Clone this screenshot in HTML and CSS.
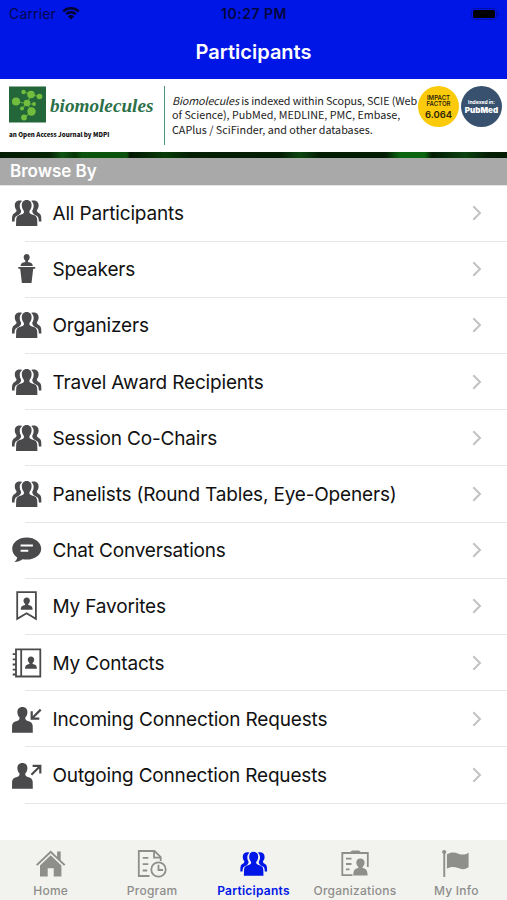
FILE: index.html
```
<!DOCTYPE html>
<html lang="en">
<head>
    <meta charset="UTF-8">
    <meta name="viewport" content="width=device-width, initial-scale=1.0">
    <title>Participants</title>
    <link rel="stylesheet" href="styles.css">
</head>
<body>
    <!-- shared icons -->
    <svg class="sprite">
        <symbol id="people" viewBox="0 0 30 30">
            <path d="M10.200 3C6.200 1.700 2.700 3.500 2.800 7.500c0 2 .7 3.400 1.700 4.600.2 1.500-.5 2.300-2.200 3.200C.4 16.400 0 18 0 23.500h2.600c0-3.600.5-4.800 2.500-5.800 2.700-1.300 4.300-2.600 4-5.200-1.100-1.600-1.500-3.200-1.300-5.400.2-1.700 1.100-3.200 2.400-4.100zM19.200 3c4-1.300 7.500.5 7.400 4.500 0 2-.7 3.400-1.700 4.600-.2 1.500.5 2.300 2.200 3.200 1.900 1.100 2.300 2.700 2.300 8.200h-2.600c0-3.600-.5-4.800-2.500-5.800-2.700-1.300-4.300-2.600-4-5.200 1.100-1.600 1.500-3.200 1.300-5.400-.2-1.700-1.100-3.200-2.400-4.100z"/>
            <path d="M14.700 2c-3.200 0-5.100 2.300-4.900 5.600.1 2.200.9 4 2.100 5.300.3 1.700-.2 2.700-2 3.300-3.700 1.200-5.500 1.900-5.700 5.500l-.2 6.300h21.400l-.2-6.300c-.2-3.600-2-4.300-5.700-5.500-1.800-.6-2.300-1.600-2-3.300 1.200-1.300 2-3.100 2.100-5.300.2-3.300-1.700-5.600-4.900-5.600z"/>
        </symbol>
        <symbol id="speaker" viewBox="0 0 30 30">
            <path d="M14.700 0c-1.900 0-3 1.400-3 3.200 0 1.500.7 2.800 1.700 3.500v1.200c-3.300.7-4.800 1.400-4.800 4h12.200c0-2.600-1.500-3.300-4.800-4V6.700c1-.7 1.700-2 1.700-3.500C17.700 1.400 16.600 0 14.700 0zM6.300 12.900h16.900v1.900H6.300zM8.200 14.700h13L19.500 29H9.900z"/>
        </symbol>
        <symbol id="chat" viewBox="0 0 30 30">
            <path fill-rule="evenodd" d="M14.700 2.500C6.500 2.500.2 7.400.2 13.700c0 3.600 1.900 6.700 5 8.700-.3 1.700-1.200 3.200-2.900 4.600 3.400-.2 6.200-1.100 8.400-2.700 10.100 1.600 18.500-3.400 18.500-10.600 0-6.300-6.300-11.200-14.500-11.200zM8.600 9.500h12.300v1.900H8.600zm0 5.300h7.700v1.900H8.600z"/>
        </symbol>
        <symbol id="favorite" viewBox="0 0 30 30">
            <path class="line" d="M5.200 1.200h18.700v26.600l-9.300-5.600-9.400 5.600z"/>
            <use href="#bust"/>
        </symbol>
        <symbol id="bust" viewBox="0 0 30 30">
            <path d="M14.700 6.400c-2 0-3.200 1.300-3.200 3.200 0 1.600.6 2.700 1.600 3.400v1c-3 .6-4.300 1.500-4.300 4.700h11.800c0-3.200-1.300-4.100-4.300-4.700v-1c1-.7 1.600-1.800 1.600-3.400 0-1.900-1.200-3.200-3.200-3.200z"/>
        </symbol>
        <symbol id="contacts" viewBox="0 0 30 30">
            <path class="line" d="M4 1.300h24.300v27.200H4zM9.200 1.300v27.200M.7 6.100H4M.7 11.300H4M.7 16.500H4M.7 21.700H4M.7 26.500H4"/>
            <use href="#bust" x="4.300" y="2"/>
        </symbol>
        <symbol id="person" viewBox="0 0 30 30">
            <path d="M10.400 3c-3.300 0-5.200 2.100-5 5.400.1 2.200 1 3.900 2.100 5.100.2 1.700-.3 2.500-2 3.200C2 18 .3 18.400.1 22L0 28.800h20.800l-.1-6.800c-.2-3.600-1.900-4-5.400-5.300-1.700-.7-2.200-1.500-2-3.200 1.100-1.200 2-2.900 2.100-5.100.2-3.300-1.700-5.400-5-5.400z"/>
        </symbol>
        <symbol id="incoming" viewBox="0 0 30 30">
            <use href="#person"/>
            <path class="line bold" d="M28.700 5.600l-8.600 8.600M19.700 7.200v7.400h7.600"/>
        </symbol>
        <symbol id="outgoing" viewBox="0 0 30 30">
            <use href="#person"/>
            <path class="line bold" d="M19.400 14.800l8.600-8.600M20.600 5.800h7.700v7.800"/>
        </symbol>
        <symbol id="chevron" viewBox="0 0 10 16">
            <path d="M1.300 1.300L8 8l-6.700 6.700"/>
        </symbol>
    </svg>

    <header class="top">
        <div class="status">
            <div class="carrier">
                Carrier
                <svg class="wifi" viewBox="0 0 18 14">
                    <path d="M1.200 5.300a11.300 11.300 0 0 1 15.600 0M4.100 8.200a7.200 7.200 0 0 1 9.800 0"/>
                    <path class="dot" d="M9 13.600L5.900 10.500a4.500 4.500 0 0 1 6.200 0z"/>
                </svg>
            </div>
            <div class="time">10:27 PM</div>
            <svg class="battery" viewBox="0 0 30 12">
                <rect class="shell" x=".5" y=".5" width="25" height="11" rx="3"/>
                <rect x="2" y="2" width="22" height="8" rx="1.500"/>
                <path class="cap" d="M27 4c1.600.6 1.600 3.400 0 4z"/>
            </svg>
        </div>
        <h1>Participants</h1>
    </header>

    <div class="banner">
        <div class="brand">
            <div class="brand-row">
                <svg class="logo" viewBox="0 0 37 36">
                    <rect width="37" height="36" fill="#23663a"/>
                    <g stroke="#57a83a" stroke-width="1.200">
                        <path fill="none" d="M7 15l11 2 4-9 8 2M18 17l5 8-8 6M14 5l8 3M13 22l5-5 7 1"/>
                    </g>
                    <g fill="#73bd3e">
                        <circle cx="7" cy="15" r="4"/>
                        <circle cx="22" cy="8" r="3.800"/>
                        <circle cx="30.500" cy="10" r="2.800"/>
                        <circle cx="14.500" cy="5.500" r="2.200"/>
                        <circle cx="18" cy="16.500" r="3.300"/>
                        <circle cx="25" cy="17.500" r="1.900"/>
                        <circle cx="13" cy="22" r="2"/>
                        <circle cx="22.500" cy="25" r="4.200"/>
                        <circle cx="15" cy="31" r="2.900"/>
                    </g>
                </svg>
                <span class="brand-name">biomolecules</span>
            </div>
            <div class="tagline">an Open Access Journal by MDPI</div>
        </div>
        <div class="blurb">
            <div class="tight"><i>Biomolecules</i> is indexed within Scopus, SCIE (Web</div>
            <div>of Science), PubMed, MEDLINE, PMC, Embase,</div>
            <div>CAPlus / SciFinder, and other databases.</div>
        </div>
        <div class="badge impact">
            <span>IMPACT</span>
            <span>FACTOR</span>
            <b>6.064</b>
        </div>
        <div class="badge pubmed">
            <span>Indexed in:</span>
            <b>PubMed</b>
        </div>
    </div>
    <div class="strip"></div>

    <h2>Browse By</h2>
    <ul class="list">
        <li><svg class="icon"><use href="#people"/></svg><span class="label">All Participants</span><svg class="chevron"><use href="#chevron"/></svg></li>
        <li><svg class="icon"><use href="#speaker"/></svg><span class="label">Speakers</span><svg class="chevron"><use href="#chevron"/></svg></li>
        <li><svg class="icon"><use href="#people"/></svg><span class="label">Organizers</span><svg class="chevron"><use href="#chevron"/></svg></li>
        <li><svg class="icon"><use href="#people"/></svg><span class="label">Travel Award Recipients</span><svg class="chevron"><use href="#chevron"/></svg></li>
        <li><svg class="icon"><use href="#people"/></svg><span class="label">Session Co-Chairs</span><svg class="chevron"><use href="#chevron"/></svg></li>
        <li><svg class="icon"><use href="#people"/></svg><span class="label">Panelists (Round Tables, Eye-Openers)</span><svg class="chevron"><use href="#chevron"/></svg></li>
        <li><svg class="icon"><use href="#chat"/></svg><span class="label">Chat Conversations</span><svg class="chevron"><use href="#chevron"/></svg></li>
        <li><svg class="icon"><use href="#favorite"/></svg><span class="label">My Favorites</span><svg class="chevron"><use href="#chevron"/></svg></li>
        <li><svg class="icon"><use href="#contacts"/></svg><span class="label">My Contacts</span><svg class="chevron"><use href="#chevron"/></svg></li>
        <li><svg class="icon"><use href="#incoming"/></svg><span class="label">Incoming Connection Requests</span><svg class="chevron"><use href="#chevron"/></svg></li>
        <li><svg class="icon"><use href="#outgoing"/></svg><span class="label">Outgoing Connection Requests</span><svg class="chevron"><use href="#chevron"/></svg></li>
    </ul>

    <nav class="tabs">
        <div class="tab">
            <svg viewBox="0 0 30 30">
                <path d="M14.700 1.500L0 15.500l1.400 1.200L14.700 4.300 28 16.700l1.400-1.200-4.700-4.500V2.500h-3.600v5.200z"/>
                <path d="M14.700 6.300L4 16.500v11h7.700v-8.200h6v8.200h7.700v-11z"/>
            </svg>
            Home
        </div>
        <div class="tab">
            <svg viewBox="0 0 30 30">
                <path class="line" d="M12.500 27H1.800V2h15.700l6.200 6.200V12M17 2v6.700h6.700M5.700 8.800h5.600M5.700 15.200h5.600M5.700 21.500h4.500"/>
                <circle class="line" cx="21.500" cy="20.500" r="7.200"/>
                <path class="line" d="M21.500 15.800v5.200h4.500"/>
            </svg>
            Program
        </div>
        <div class="tab active">
            <svg viewBox="0 0 30 30"><use href="#people" x="1.200" y="1" width="27.500" height="27.500"/></svg>
            Participants
        </div>
        <div class="tab">
            <svg viewBox="0 0 30 30">
                <path class="line" d="M12.500 26.200H2.300V4h25.500v14M6 9.700h5.500M6 15h5.500M6 20.300h3.500"/>
                <path d="M10 4.500V3.200L12 1.500h7l2 1.700v1.300zM20.300 9.500c-2.600 0-4 1.700-4 4 0 1.900.8 3.300 2 4.200v1.300c-3.600.9-5 2-5 7.500h14.300c0-5.500-1.400-6.600-5-7.500v-1.300c1.200-.9 2-2.300 2-4.200 0-2.300-1.500-4-4.300-4z"/>
            </svg>
            Organizations
        </div>
        <div class="tab">
            <svg viewBox="0 0 30 30">
                <circle cx="3.200" cy="3" r="2.100"/>
                <path d="M2.300 3h1.900v25H2.300zM5.900 5.200c4.500-2.400 8-1.900 11.500-.5 3.500 1.300 6.500 1.400 10.200-.9v14.500c-3.700 2.400-7 2.300-10.500.8-3.500-1.400-7-1.800-11.200.5z"/>
            </svg>
            My Info
        </div>
    </nav>
</body>
</html>
```
FILE: styles.css
```
* {
    box-sizing: border-box;
}
body {
    margin: 0;
    height: 900px;
    display: flex;
    flex-direction: column;
    background-color: #fff;
    font-family: Inter, "Liberation Sans", sans-serif;
    overflow: hidden;
}
.sprite {
    display: none;
}
.line {
    fill: none;
    stroke: currentColor;
    stroke-width: 1.8;
}
.bold {
    stroke-width: 2.2;
}
.top {
    height: 79px;
    background-color: #0016e6;
}
.status {
    height: 27px;
    padding: 0 8px 0 9px;
    display: grid;
    grid-template-columns: 1fr auto 1fr;
    align-items: center;
    font-size: 14px;
    color: #00064d;
}
.carrier {
    display: flex;
    align-items: center;
    gap: 6px;
    letter-spacing: 0.15px;
}
.wifi {
    width: 18px;
    height: 14px;
    margin-top: -1px;
    fill: none;
    stroke: #000533;
    stroke-width: 2.4;
}
.wifi .dot {
    fill: #000533;
    stroke: none;
}
.time {
    font-weight: 600;
    letter-spacing: 0.5px;
    color: #000640;
}
.battery {
    width: 30px;
    height: 12px;
    justify-self: end;
    margin-right: -2px;
}
.battery .shell {
    fill: none;
    stroke: #000eaa;
}
.battery .cap {
    fill: #000eaa;
}
h1 {
    margin: 0;
    height: 51px;
    line-height: 51px;
    text-align: center;
    font-size: 20px;
    font-weight: 600;
    color: #fff;
}
.banner {
    height: 73px;
    padding-top: 7px;
    display: flex;
    align-items: flex-start;
    font-family: "Noto Sans CJK SC", "Noto Sans", sans-serif;
}
.brand {
    width: 165px;
    height: 59px;
    padding-left: 9px;
    border-right: 1px solid #4a9679;
}
.brand-row {
    display: flex;
    height: 37px;
    gap: 4px;
}
.logo {
    width: 37px;
    height: 37px;
}
.brand-name {
    font-family: "Liberation Serif", serif;
    font-size: 19.2px;
    line-height: 40px;
    font-style: italic;
    font-weight: bold;
    color: #2b7048;
}
.tagline {
    margin-top: 7px;
    font-size: 6.2px;
    line-height: 10px;
    font-weight: 900;
    color: #111;
    white-space: nowrap;
}
.blurb {
    width: 253px;
    padding: 7.5px 0 0 7px;
    font-size: 10.75px;
    line-height: 14.5px;
    color: #222;
    white-space: nowrap;
}
.tight {
    letter-spacing: -0.1px;
}
.badge {
    width: 41px;
    height: 41px;
    border-radius: 50%;
    display: flex;
    flex-direction: column;
    align-items: center;
    justify-content: center;
    font-family: Inter, sans-serif;
    white-space: nowrap;
}
.impact {
    background-color: #fbcb0b;
    color: #2d2508;
    font-size: 6px;
    line-height: 6px;
    font-weight: 600;
}
.impact b {
    margin-top: 3px;
    font-size: 9.5px;
    line-height: 9px;
    font-weight: 600;
}
.pubmed {
    margin-left: 2px;
    background-color: #37516f;
    color: #fff;
    font-size: 5px;
    line-height: 6px;
    font-weight: 700;
}
.pubmed b {
    font-size: 8px;
    line-height: 10px;
}
.strip {
    height: 6px;
    background: linear-gradient(90deg, #041c04 0, #052305 50px, #105314 62px, #073407 75px, #0b520c 82px, #0b520c 127px, #031703 130px, #073c08 165px, #041f04 190px, #041b04 280px, #0b4510 300px, #041b04 320px, #041b04 385px, #0b6410 400px, #0b6410 425px, #041b04 432px, #0b4210 465px, #041b04 490px);
}
h2 {
    margin: 0;
    height: 27px;
    padding-left: 10px;
    line-height: 27px;
    font-size: 17px;
    font-weight: 600;
    color: #fff;
    background-color: #a9a9a9;
}
.list {
    margin: 0;
    padding: 0.5px 0 0;
    list-style: none;
    background: linear-gradient(#e6e6e6, #e6e6e6) 0 0 / 100% 1px no-repeat;
}
.list li {
    height: 56.2px;
    padding: 0 25px 0 12px;
    display: flex;
    align-items: center;
    background: linear-gradient(#e6e6e6, #e6e6e6) 25px 100% / 100% 1px no-repeat;
}
.icon {
    width: 30px;
    height: 30px;
    margin: -1px 10.5px 0 0;
    fill: #4a4a4c;
    color: #4a4a4c;
}
.label {
    flex: 1;
    font-size: 19px;
    letter-spacing: -0.17px;
    color: #111;
    white-space: nowrap;
}
.chevron {
    width: 10px;
    height: 16px;
    margin-top: -1px;
    fill: none;
    stroke: #c2c2c5;
    stroke-width: 2;
}
.tabs {
    margin-top: auto;
    height: 60px;
    display: flex;
    background-color: #f2f2ef;
}
.tab {
    flex: 1;
    display: flex;
    flex-direction: column;
    align-items: center;
    padding-top: 9px;
    font-size: 12px;
    line-height: 24px;
    font-weight: 500;
    letter-spacing: 0.25px;
    color: #8e8e8b;
    fill: #8e8e8b;
    white-space: nowrap;
}
.tab svg {
    flex-shrink: 0;
    width: 30px;
    height: 30px;
}
.active {
    color: #0016e6;
    fill: #0016e6;
    font-weight: 600;
}
```
